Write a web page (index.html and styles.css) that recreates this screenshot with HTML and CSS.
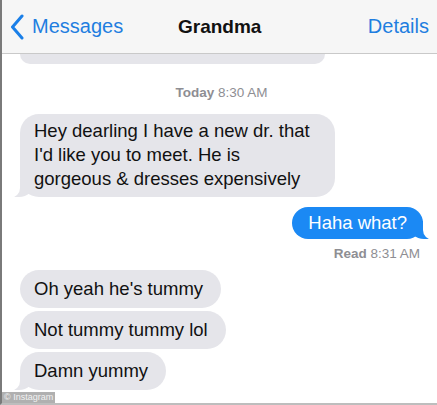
FILE: index.html
```html
<!DOCTYPE html>
<html>
<head>
<meta charset="utf-8">
<link rel="stylesheet" href="styles.css">
</head>
<body>
<div class="screen">
  <header class="nav">
    <div class="back">
      <svg class="chev" width="14" height="26" viewBox="0 0 14 26"><path d="M12 2 L2.5 13 L12 24" fill="none" stroke="#1a7fe8" stroke-width="3" stroke-linecap="round" stroke-linejoin="round"/></svg>
      <span>Messages</span>
    </div>
    <div class="title">Grandma</div>
    <div class="details">Details</div>
  </header>
  <main class="thread">
    <div class="prev-bubble"></div>
    <div class="stamp"><b>Today</b> 8:30 AM</div>
    <div class="bubble in tail big">Hey dearling I have a new dr. that I'd like you to meet. He is gorgeous &amp; dresses expensively</div>
    <div class="row-out"><div class="bubble out tail">Haha what?</div></div>
    <div class="read"><b>Read</b> 8:31 AM</div>
    <div class="group">
      <div class="bubble in">Oh yeah he's tummy</div>
      <div class="bubble in">Not tummy tummy lol</div>
      <div class="bubble in tail">Damn yummy</div>
    </div>
  </main>
  <div class="watermark">© Instagram</div>
</div>
</body>
</html>
```
FILE: styles.css
```css
html, body { margin: 0; padding: 0; background: #fff; }
body { width: 437px; height: 405px; overflow: hidden; font-family: "Liberation Sans", Arial, sans-serif; }
.screen { position: relative; width: 435px; height: 403px; border-left: 2px solid #7a7a7a; border-bottom: 2px solid #bdbdbd; background: #fff; overflow: hidden; }
.nav { height: 53px; background: #f6f6f6; border-bottom: 1px solid #c9c9c9; display: flex; align-items: center; position: relative; z-index: 2; }
.back { display: flex; align-items: center; gap: 8px; padding-left: 8px; color: #1f7ee0; font-size: 20px; width: 168px; }
.chev { display: block; }
.title { font-weight: bold; font-size: 19px; color: #111; flex: 1; }
.details { color: #1f7ee0; font-size: 20px; padding-right: 8px; }
.thread { display: flex; flex-direction: column; padding: 0 14px 0 18px; }
.prev-bubble { height: 10px; width: 305px; background: #e5e5ea; border-radius: 0 0 18px 18px; margin-bottom: 21px; }
.stamp, .read { font-size: 13.5px; color: #8e8e93; }
.stamp { text-align: center; margin-bottom: 14px; }
.stamp b, .read b { font-weight: bold; }
.bubble { position: relative; font-size: 18.5px; line-height: 24px; border-radius: 19px; padding: 7px 18px 7px 14px; box-sizing: border-box; }
.bubble.in { background: #e5e5ea; color: #111; align-self: flex-start; }
.bubble.big { width: 315px; padding: 5px 14px 6px; margin-bottom: 10px; }
.bubble.out { background: #1b89f4; color: #fff; padding: 4px 16px; }
.row-out { display: flex; justify-content: flex-end; }
.read { text-align: right; margin: 7px 3px 9px 0; }
.group { display: flex; flex-direction: column; gap: 3px; align-items: flex-start; }
.bubble.in.tail::before { content: ""; position: absolute; left: -6px; bottom: 0; width: 20px; height: 18px; background: #e5e5ea; border-bottom-right-radius: 15px 14px; }
.bubble.in.tail::after { content: ""; position: absolute; left: -10px; bottom: -1px; width: 10px; height: 20px; background: #fff; border-bottom-right-radius: 10px; }
.bubble.out.tail::before { content: ""; position: absolute; right: -6px; bottom: 0; width: 20px; height: 18px; background: #1b89f4; border-bottom-left-radius: 15px 14px; }
.bubble.out.tail::after { content: ""; position: absolute; right: -10px; bottom: -1px; width: 10px; height: 20px; background: #fff; border-bottom-left-radius: 10px; }
.watermark { position: absolute; left: 0; bottom: 0; background: rgba(150,150,150,0.75); color: #f2f2f2; font-size: 9px; padding: 0 2px; line-height: 11px; }
```
